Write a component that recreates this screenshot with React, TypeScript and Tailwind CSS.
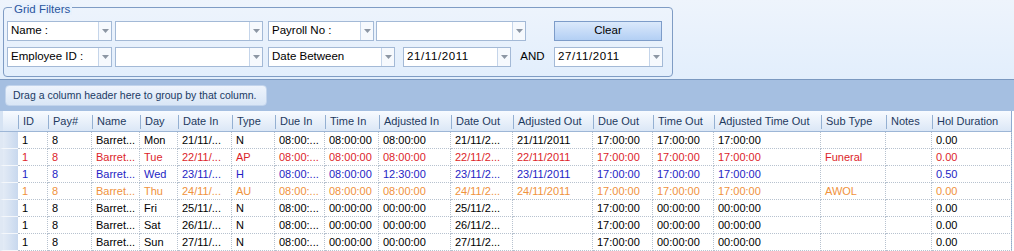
import React from "react";

const FONT = "font-['Liberation_Sans',Arial,sans-serif]";

function Arrow() {
  return (
    <svg width="7" height="4" viewBox="0 0 7 4" className="block">
      <path d="M0 0 H7 L3.5 4 Z" fill="#8c96a3" />
    </svg>
  );
}

function Combo({ w, text, track }: { w: string; text?: string; track?: boolean }) {
  return (
    <div className={`${w} h-[20px] flex bg-white border border-[#a3b9d6] shrink-0`}>
      <div className={`flex-1 flex items-center pl-[3px] text-[11.5px] text-black whitespace-nowrap overflow-hidden ${track ? "tracking-[0.6px]" : ""}`}>
        {text}
      </div>
      <div className="w-[13px] flex items-center justify-center border-l border-[#c5d5ea] bg-[#f6f9fd]">
        <Arrow />
      </div>
    </div>
  );
}

type Row = { c: string; v: string[] };

const cols: { name: string; w: number }[] = [
  { name: "ID", w: 30 },
  { name: "Pay#", w: 44 },
  { name: "Name", w: 48 },
  { name: "Day", w: 38 },
  { name: "Date In", w: 54 },
  { name: "Type", w: 43 },
  { name: "Due In", w: 50 },
  { name: "Time In", w: 54 },
  { name: "Adjusted In", w: 72 },
  { name: "Date Out", w: 62 },
  { name: "Adjusted Out", w: 80 },
  { name: "Due Out", w: 60 },
  { name: "Time Out", w: 61 },
  { name: "Adjusted Time Out", w: 107 },
  { name: "Sub Type", w: 65 },
  { name: "Notes", w: 46 },
  { name: "Hol Duration", w: 80 },
];

const rows: Row[] = [
  { c: "text-black", v: ["1", "8", "Barret...", "Mon", "21/11/...", "N", "08:00:...", "08:00:00", "08:00:00", "21/11/2...", "21/11/2011", "17:00:00", "17:00:00", "17:00:00", "", "", "0.00"] },
  { c: "text-[#dc1e2a]", v: ["1", "8", "Barret...", "Tue", "22/11/...", "AP", "08:00:...", "08:00:00", "08:00:00", "22/11/2...", "22/11/2011", "17:00:00", "17:00:00", "17:00:00", "Funeral", "", "0.00"] },
  { c: "text-[#1e1ec4]", v: ["1", "8", "Barret...", "Wed", "23/11/...", "H", "08:00:...", "08:00:00", "12:30:00", "23/11/2...", "23/11/2011", "17:00:00", "17:00:00", "17:00:00", "", "", "0.50"] },
  { c: "text-[#f0923c]", v: ["1", "8", "Barret...", "Thu", "24/11/...", "AU", "08:00:...", "08:00:00", "08:00:00", "24/11/2...", "24/11/2011", "17:00:00", "17:00:00", "17:00:00", "AWOL", "", "0.00"] },
  { c: "text-black", v: ["1", "8", "Barret...", "Fri", "25/11/...", "N", "08:00:...", "00:00:00", "00:00:00", "25/11/2...", "", "17:00:00", "00:00:00", "00:00:00", "", "", "0.00"] },
  { c: "text-black", v: ["1", "8", "Barret...", "Sat", "26/11/...", "N", "08:00:...", "00:00:00", "00:00:00", "26/11/2...", "", "17:00:00", "00:00:00", "00:00:00", "", "", "0.00"] },
  { c: "text-black", v: ["1", "8", "Barret...", "Sun", "27/11/...", "N", "08:00:...", "00:00:00", "00:00:00", "27/11/2...", "", "17:00:00", "00:00:00", "00:00:00", "", "", "0.00"] },
];

export default function App() {
  return (
    <div className={`w-[1014px] h-[251px] overflow-hidden bg-white ${FONT} text-[11px]`}>
      {/* Filter panel */}
      <div className="h-[80px] bg-gradient-to-b from-[#eef4fc] to-[#e2eefc] border-b border-[#7a98c0] pt-[7px] pl-[3px]">
        <div className="relative w-[670px] h-[70px] border border-[#7f9cc4] rounded-[4px] pt-[13px] pl-[3px]">
          <div className="absolute left-[8px] top-[-5px] px-[2px] bg-[#e8f1fc] text-[11.5px] text-[#2a559e] leading-[12px]">
            Grid Filters
          </div>
          <div className="flex items-center">
            <Combo w="w-[105px]" text="Name :" />
            <div className="w-[3px]" />
            <Combo w="w-[148px]" />
            <div className="w-[5px]" />
            <Combo w="w-[106px]" text="Payroll No :" />
            <div className="w-[2px]" />
            <Combo w="w-[150px]" />
            <div className="w-[28px]" />
            <div className="w-[108px] h-[20px] border border-[#7d9cc9] bg-gradient-to-b from-[#dbe9fb] to-[#b3cff4] flex items-center justify-center text-[11.5px] text-black">
              Clear
            </div>
          </div>
          <div className="flex items-center mt-[6px]">
            <Combo w="w-[105px]" text="Employee ID :" />
            <div className="w-[3px]" />
            <Combo w="w-[148px]" />
            <div className="w-[5px]" />
            <Combo w="w-[127px]" text="Date Between" />
            <div className="w-[8px]" />
            <Combo w="w-[108px]" text="21/11/2011" track />
            <div className="w-[43px] text-center text-[11.5px] text-black">AND</div>
            <Combo w="w-[109px]" text="27/11/2011" track />
          </div>
        </div>
      </div>
      {/* Group-by panel */}
      <div className="h-[31px] bg-[#a5bfe1] pt-[5px] pl-[5px]">
        <div className="w-[262px] h-[21px] rounded-[4px] border border-[#c2d4ec] bg-gradient-to-b from-[#eef4fc] to-[#d9e6f6] flex items-center pl-[7px] text-[10.5px] text-[#203a63] whitespace-nowrap overflow-hidden">
          Drag a column header here to group by that column.
        </div>
      </div>
      {/* Grid */}
      <div className="w-[1012px] border-r border-[#8eaad0]">
        <div className="flex h-[21px] bg-gradient-to-b from-[#f8fbff] to-[#dbe7f6] border-b border-[#9db6d6]">
          <div className="w-[18px] shrink-0 border-l-[3px] border-[#d6e3f3]" />
          {cols.map((c) => (
            <div key={c.name} style={{ width: c.w }} className="shrink-0 flex items-center relative pl-[5px] text-[#1e3a5f] whitespace-nowrap overflow-hidden">
              <div className="absolute left-0 top-[4px] h-[14px] w-[1px] bg-[#94b0d2]" />
              {c.name}
            </div>
          ))}
        </div>
        {rows.map((r, i) => (
          <div key={i} className={`flex h-[17px] ${r.c}`}>
            <div className="w-[18px] shrink-0 border-l-[3px] border-l-[#dfe8f4] bg-gradient-to-r from-[#e3ebf6] to-[#c8d8ee] border-b border-b-[#f4f7fb]" />
            {r.v.map((v, j) => (
              <div key={j} style={{ width: cols[j].w }} className="shrink-0 flex items-center pl-[4px] border-r border-b border-dotted border-[#b7c2cf] whitespace-nowrap overflow-hidden leading-none">
                {v}
              </div>
            ))}
          </div>
        ))}
      </div>
    </div>
  );
}
